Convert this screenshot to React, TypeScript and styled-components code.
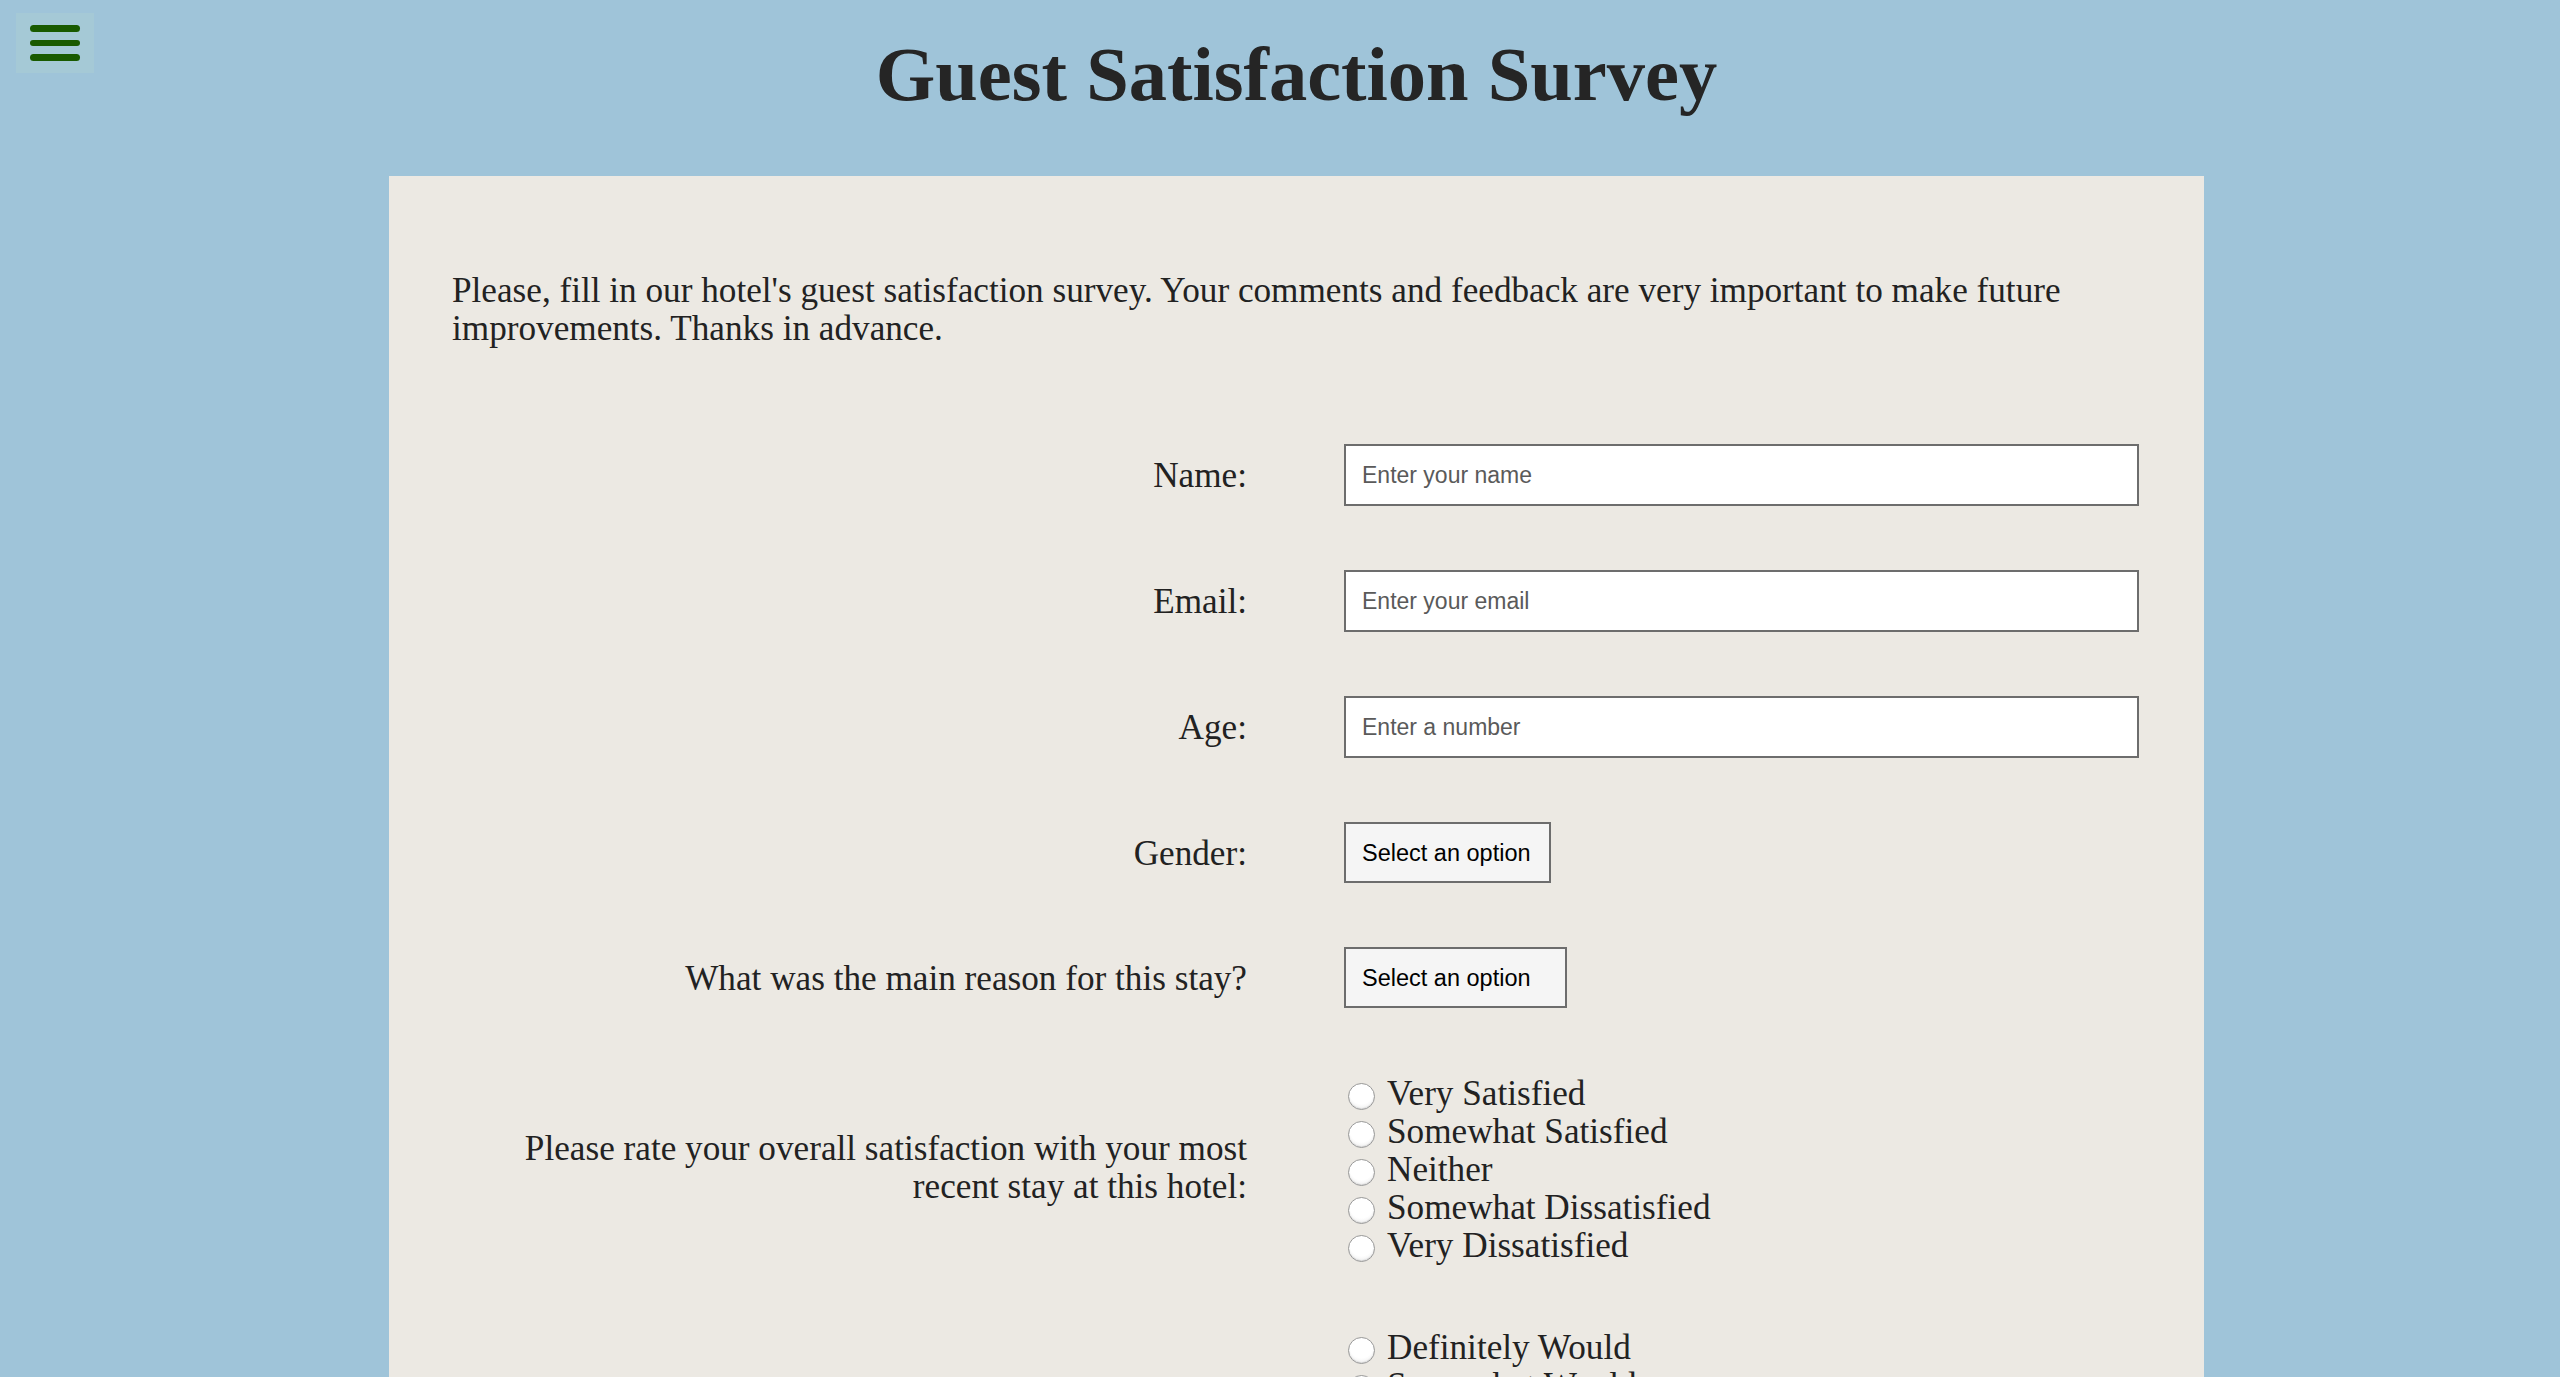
import React from "react";
import styled, { createGlobalStyle } from "styled-components";

const GlobalStyle = createGlobalStyle`
  html, body {
    margin: 0;
    padding: 0;
    background: #9fc4d9;
  }
  * { box-sizing: border-box; }
`;

const serif = `"Liberation Serif", "Times New Roman", serif`;
const sans = `"Liberation Sans", Arial, sans-serif`;

const MenuButton = styled.button`
  position: absolute;
  top: 13px;
  left: 16px;
  width: 78px;
  height: 60px;
  padding: 12px 14px;
  border: none;
  background: #a5c9d6;
  display: flex;
  flex-direction: column;
  gap: 8px;
  cursor: pointer;
`;

const Bar = styled.span`
  display: block;
  width: 50px;
  height: 8px;
  border-radius: 4px;
  background: #195a00;
`;

const Wrapper = styled.div`
  margin: 0 356px 0 389px;
`;

const Header = styled.header`
  padding: 37px 0 64px;
`;

const Title = styled.h1`
  margin: 0;
  font-family: ${serif};
  font-weight: 700;
  font-size: 76.5px;
  line-height: 75px;
  color: #252525;
  text-align: center;
`;

const Card = styled.main`
  background: #ece9e3;
  padding: 96px 65px 200px 63px;
  font-family: ${serif};
  color: #222;
`;

const Intro = styled.p`
  margin: 0;
  font-size: 35.2px;
  line-height: 38px;
`;

const Form = styled.form`
  margin-top: 96px;
  display: grid;
  grid-template-columns: 795px 795px;
  column-gap: 97px;
  row-gap: 64px;
  align-items: center;
`;

const Label = styled.label`
  text-align: right;
  font-size: 35.2px;
  line-height: 38px;
  padding-top: 2px;
`;

const TextInput = styled.input`
  width: 100%;
  height: 62px;
  border: 2px solid #6d6d6d;
  background: #fff;
  padding: 0 16px;
  font-family: ${sans};
  font-size: 23px;
  color: #222;
  outline: none;
  &::placeholder {
    color: #5a5a5a;
  }
`;

const Select = styled.select<{ $w: number }>`
  appearance: none;
  width: ${(p) => p.$w}px;
  height: 61px;
  border: 2px solid #6d6d6d;
  border-radius: 0;
  background: #f5f5f5;
  padding: 0 16px;
  font-family: ${sans};
  font-size: 23.5px;
  color: #000;
`;

const RadioGroup = styled.div`
  display: flex;
  flex-direction: column;
  padding-top: 3px;
  margin-bottom: -3px;
`;

const RadioItem = styled.label`
  display: flex;
  align-items: center;
  height: 38px;
  font-size: 35.2px;
  line-height: 38px;
  white-space: nowrap;
`;

const Radio = styled.input`
  appearance: none;
  width: 27px;
  height: 27px;
  margin: 4px 12px 0 4px;
  border-radius: 50%;
  border: 1.5px solid #999;
  background: radial-gradient(circle at 50% 35%, #ffffff 55%, #e4e4e4 100%);
  box-shadow: inset 0 -1px 1px rgba(0, 0, 0, 0.1);
  flex-shrink: 0;
`;

const satisfaction = [
  "Very Satisfied",
  "Somewhat Satisfied",
  "Neither",
  "Somewhat Dissatisfied",
  "Very Dissatisfied",
];

const recommend = [
  "Definitely Would",
  "Somewhat Would",
  "Neither",
  "Somewhat Wouldn't",
  "Definitely Wouldn't",
];

export default function App() {
  return (
    <>
      <GlobalStyle />
      <MenuButton aria-label="menu">
        <Bar />
        <Bar />
        <Bar />
      </MenuButton>
      <Wrapper>
        <Header>
          <Title>Guest Satisfaction Survey</Title>
        </Header>
        <Card>
          <Intro>
            Please, fill in our hotel's guest satisfaction survey. Your comments and feedback are very
            important to make future improvements. Thanks in advance.
          </Intro>
          <Form onSubmit={(e) => e.preventDefault()}>
            <Label htmlFor="name">Name:</Label>
            <TextInput id="name" type="text" placeholder="Enter your name" />

            <Label htmlFor="email">Email:</Label>
            <TextInput id="email" type="email" placeholder="Enter your email" />

            <Label htmlFor="age">Age:</Label>
            <TextInput id="age" type="number" placeholder="Enter a number" />

            <Label htmlFor="gender">Gender:</Label>
            <div>
              <Select id="gender" $w={207} defaultValue="">
                <option value="">Select an option</option>
                <option>Male</option>
                <option>Female</option>
              </Select>
            </div>

            <Label htmlFor="reason">What was the main reason for this stay?</Label>
            <div>
              <Select id="reason" $w={223} defaultValue="">
                <option value="">Select an option</option>
                <option>Business</option>
                <option>Leisure</option>
              </Select>
            </div>

            <Label>
              Please rate your overall satisfaction with your most
              <br />
              recent stay at this hotel:
            </Label>
            <RadioGroup>
              {satisfaction.map((s) => (
                <RadioItem key={s}>
                  <Radio type="radio" name="satisfaction" value={s} />
                  {s}
                </RadioItem>
              ))}
            </RadioGroup>

            <Label>How likely are you to recommend this hotel to a friend?</Label>
            <RadioGroup>
              {recommend.map((s) => (
                <RadioItem key={s}>
                  <Radio type="radio" name="recommend" value={s} />
                  {s}
                </RadioItem>
              ))}
            </RadioGroup>
          </Form>
        </Card>
      </Wrapper>
    </>
  );
}
